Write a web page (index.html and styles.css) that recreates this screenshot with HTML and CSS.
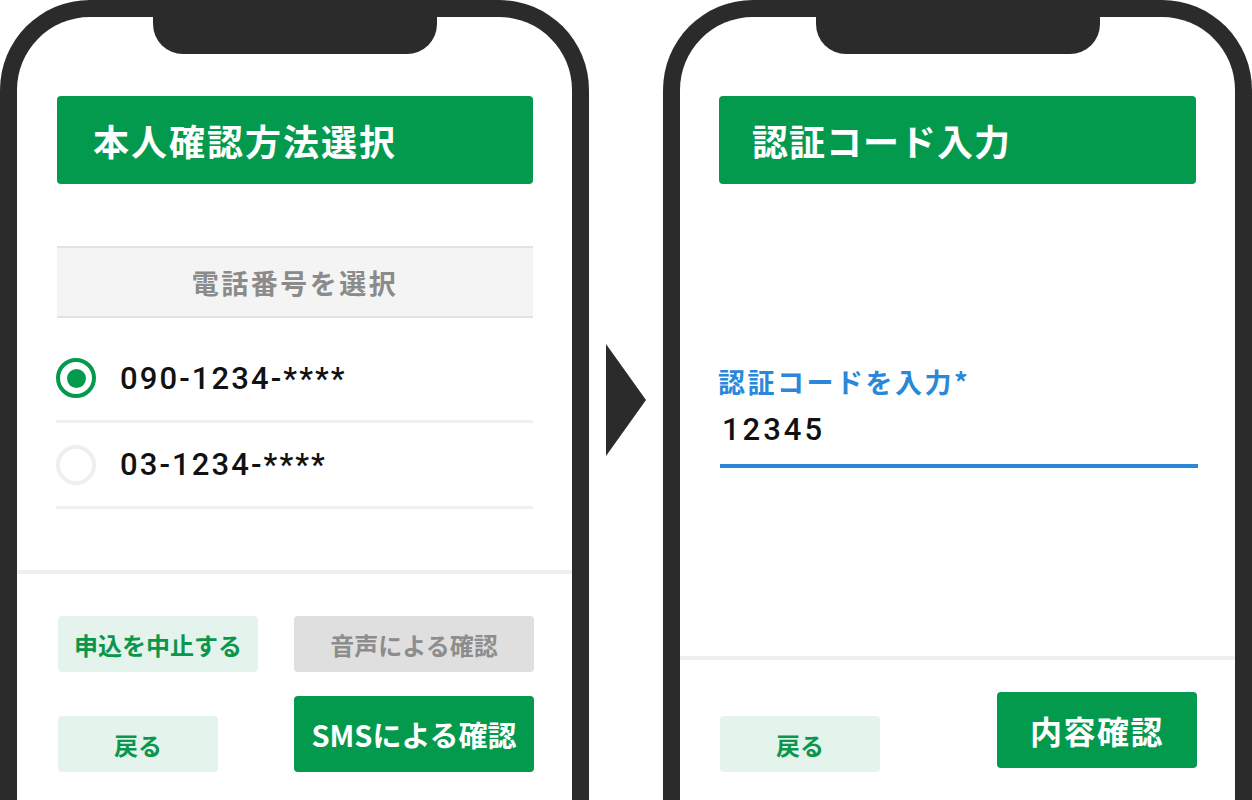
FILE: index.html
```html
<!DOCTYPE html>
<html lang="ja">
<head>
<meta charset="utf-8">
<title>本人確認フロー</title>
<link rel="stylesheet" href="styles.css">
</head>
<body>
<div class="stage">
  <section class="phone phone-select">
    <div class="notch"></div>
    <div class="screen">
      <div class="main">
        <h1 class="title">本人確認方法選択</h1>
        <div class="select-head">電話番号を選択</div>
        <ul class="radio-list">
          <li class="radio-row">
            <span class="radio radio-on"></span>
            <span class="phone-num">090-1234-****</span>
          </li>
          <li class="radio-row">
            <span class="radio"></span>
            <span class="phone-num">03-1234-****</span>
          </li>
        </ul>
      </div>
      <div class="footer footer-grid">
        <button class="btn btn-light btn-cancel">申込を中止する</button>
        <button class="btn btn-gray btn-voice">音声による確認</button>
        <button class="btn btn-light btn-back">戻る</button>
        <button class="btn btn-green btn-sms">SMSによる確認</button>
      </div>
    </div>
  </section>

  <div class="arrow">
    <svg width="40" height="112" viewBox="0 0 40 112"><polygon points="0,0 40,56 0,112" fill="#2b2b2b"/></svg>
  </div>

  <section class="phone phone-code">
    <div class="notch"></div>
    <div class="screen">
      <div class="main">
        <h1 class="title title-code">認証コード入力</h1>
        <div class="field">
          <label class="field-label">認証コードを入力*</label>
          <div class="field-input">12345</div>
        </div>
      </div>
      <div class="footer footer-row">
        <button class="btn btn-light btn-back btn-back-r">戻る</button>
        <button class="btn btn-green btn-confirm">内容確認</button>
      </div>
    </div>
  </section>
</div>
</body>
</html>
```

FILE: styles.css
```css
html, body {
  margin: 0;
  padding: 0;
  width: 1252px;
  height: 800px;
  overflow: hidden;
  background: #ffffff;
  font-family: "Noto Sans CJK JP", sans-serif;
}

.stage {
  display: flex;
  align-items: flex-start;
  gap: 17px;
  height: 800px;
  overflow: hidden;
}

.phone {
  position: relative;
  box-sizing: border-box;
  width: 589px;
  height: 800px;
  flex: 0 0 589px;
  border: 17px solid #2b2b2b;
  border-bottom: none;
  border-radius: 90px 90px 0 0;
  background: #ffffff;
  overflow: hidden;
}

.notch {
  position: absolute;
  top: 0;
  left: 50%;
  width: 284px;
  height: 37px;
  margin-left: -142px;
  background: #2b2b2b;
  border-radius: 0 0 30px 30px;
}

.screen {
  display: flex;
  flex-direction: column;
}

.main {
  padding: 79px 39px 0 40px;
}

.phone-select .main {
  padding-bottom: 61px;
}

.phone-code .main {
  padding: 79px 39px 188px 39px;
}

.title {
  margin: 0;
  height: 88px;
  box-sizing: border-box;
  display: flex;
  align-items: center;
  padding-left: 36px;
  background: #039a4e;
  border-radius: 4px;
  color: #ffffff;
  font-size: 36px;
  font-weight: 700;
  letter-spacing: 2px;
}

.title-code {
  padding-left: 33px;
  letter-spacing: 1px;
}

.select-head {
  margin-top: 62px;
  height: 72px;
  box-sizing: border-box;
  display: flex;
  align-items: center;
  justify-content: center;
  background: #f4f4f4;
  border-top: 2px solid #e2e2e2;
  border-bottom: 2px solid #e2e2e2;
  color: #8b8b8b;
  font-size: 27px;
  font-weight: 700;
  letter-spacing: 2.5px;
}

.radio-list {
  list-style: none;
  margin: 18px 0 0;
  padding: 0;
}

.radio-row {
  height: 87px;
  box-sizing: border-box;
  display: flex;
  align-items: center;
  gap: 24px;
  border-bottom: 3px solid #f0f0f0;
  margin-left: -1px;
}

.radio-row + .radio-row {
  height: 86px;
}

.radio {
  box-sizing: border-box;
  width: 40px;
  height: 40px;
  border-radius: 50%;
  border: 4px solid #efefef;
  display: flex;
  align-items: center;
  justify-content: center;
}

.radio-on {
  border: 4.5px solid #039a4e;
}

.radio-on::after {
  content: "";
  width: 19px;
  height: 19px;
  border-radius: 50%;
  background: #039a4e;
}

.phone-num {
  font-family: Roboto, "Noto Sans CJK JP", sans-serif;
  font-weight: 500;
  font-size: 31px;
  letter-spacing: 2.1px;
  color: #111111;
  line-height: 1;
}

.footer {
  border-top: 4px solid #efefef;
}

.footer-grid {
  display: grid;
  grid-template-columns: 236px 240px;
  row-gap: 24px;
  align-items: end;
  padding: 42px 0 0 41px;
}

.btn {
  display: flex;
  align-items: center;
  justify-content: center;
  box-sizing: border-box;
  border: none;
  border-radius: 4px;
  padding: 0;
  font-family: "Noto Sans CJK JP", sans-serif;
  font-weight: 700;
  font-size: 24px;
}

.btn-light {
  background: #e4f3eb;
  color: #0b964d;
}

.btn-gray {
  background: #dfdfdf;
  color: #8d8d8d;
}

.btn-green {
  background: #039a4e;
  color: #ffffff;
}

.btn-cancel {
  width: 200px;
  height: 56px;
}

.btn-voice {
  width: 240px;
  height: 56px;
}

.btn-back {
  width: 160px;
  height: 56px;
}

.btn-sms {
  width: 240px;
  height: 76px;
  font-size: 29px;
}

.field {
  margin-top: 180px;
  display: flex;
  flex-direction: column;
}

.field-label {
  color: #2b88d9;
  font-size: 27px;
  font-weight: 700;
  letter-spacing: 2.5px;
  line-height: 36px;
  margin-left: -1px;
}

.field-input {
  margin-top: 10px;
  margin-left: 1px;
  margin-right: -2px;
  padding: 0 0 14px 2px;
  border-bottom: 4px solid #2b88d9;
  font-family: Roboto, "Noto Sans CJK JP", sans-serif;
  font-weight: 500;
  font-size: 31px;
  letter-spacing: 3px;
  line-height: 40px;
  color: #111111;
}

.footer-row {
  display: flex;
  justify-content: space-between;
  align-items: flex-start;
  padding: 0 38px 0 40px;
}

.btn-back-r {
  margin-top: 56px;
}

.btn-confirm {
  margin-top: 32px;
  width: 200px;
  height: 76px;
  font-size: 32px;
  letter-spacing: 1.5px;
}

.arrow {
  flex: 0 0 40px;
  margin-top: 344px;
  line-height: 0;
}
```
